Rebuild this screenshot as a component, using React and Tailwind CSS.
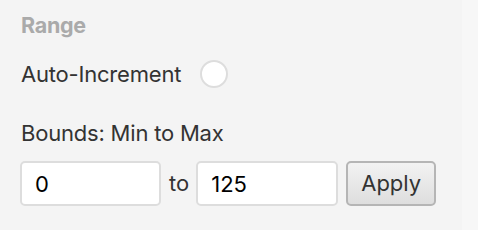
import React, { useState } from 'react';

const App = () => {
    const [auto, setAuto] = useState(false);
    const [min, setMin] = useState("0");
    const [max, setMax] = useState("125");

    return (
        <div className="flex w-[478px] h-[230px] bg-[#f4f4f4] text-[#333333]" style={{ fontFamily: 'Inter, "Liberation Sans", sans-serif' }}>
            <div className="flex-1 pl-[20px] pt-[11px]">
                <div className="text-[21.5px] leading-[28px] font-bold text-[#aaaaaa] pl-[1px] tracking-[-0.3px]">Range</div>

                <div className="flex items-center mt-[20px] h-[30px]">
                    <span className="text-[22px] pl-[1px] tracking-[-0.2px]">Auto-Increment</span>
                    <button
                        type="button"
                        onClick={() => setAuto(!auto)}
                        className="ml-[19px] w-[28px] h-[28px] rounded-full border-2 border-[#dddddd] bg-white"
                    />
                </div>

                <div className="text-[22px] leading-[30px] mt-[29px] pl-[1px] tracking-[-0.2px]">Bounds: Min to Max</div>

                <div className="flex items-center mt-[13px]">
                    <input
                        value={min}
                        onChange={(e) => setMin(e.target.value)}
                        className="w-[141px] h-[45px] border-2 border-[#dddddd] rounded-[5px] bg-white px-[13px] text-[22px] text-black outline-none"
                    />
                    <span className="ml-[8px] mr-[7px] text-[22px]">to</span>
                    <input
                        value={max}
                        onChange={(e) => setMax(e.target.value)}
                        className="w-[142px] h-[45px] border-2 border-[#dddddd] rounded-[5px] bg-white px-[13px] text-[22px] text-black outline-none"
                    />
                    <button
                        type="button"
                        className="ml-[8px] w-[90px] h-[45px] border-2 border-[#b5b5b5] rounded-[5px] bg-gradient-to-b from-[#f2f2f2] to-[#dedede] text-[22px] text-[#333333]"
                    >
                        Apply
                    </button>
                </div>
            </div>
            <div className="w-[16px] bg-[#f7f7f7]" />
        </div>
    );
};

export default App;
